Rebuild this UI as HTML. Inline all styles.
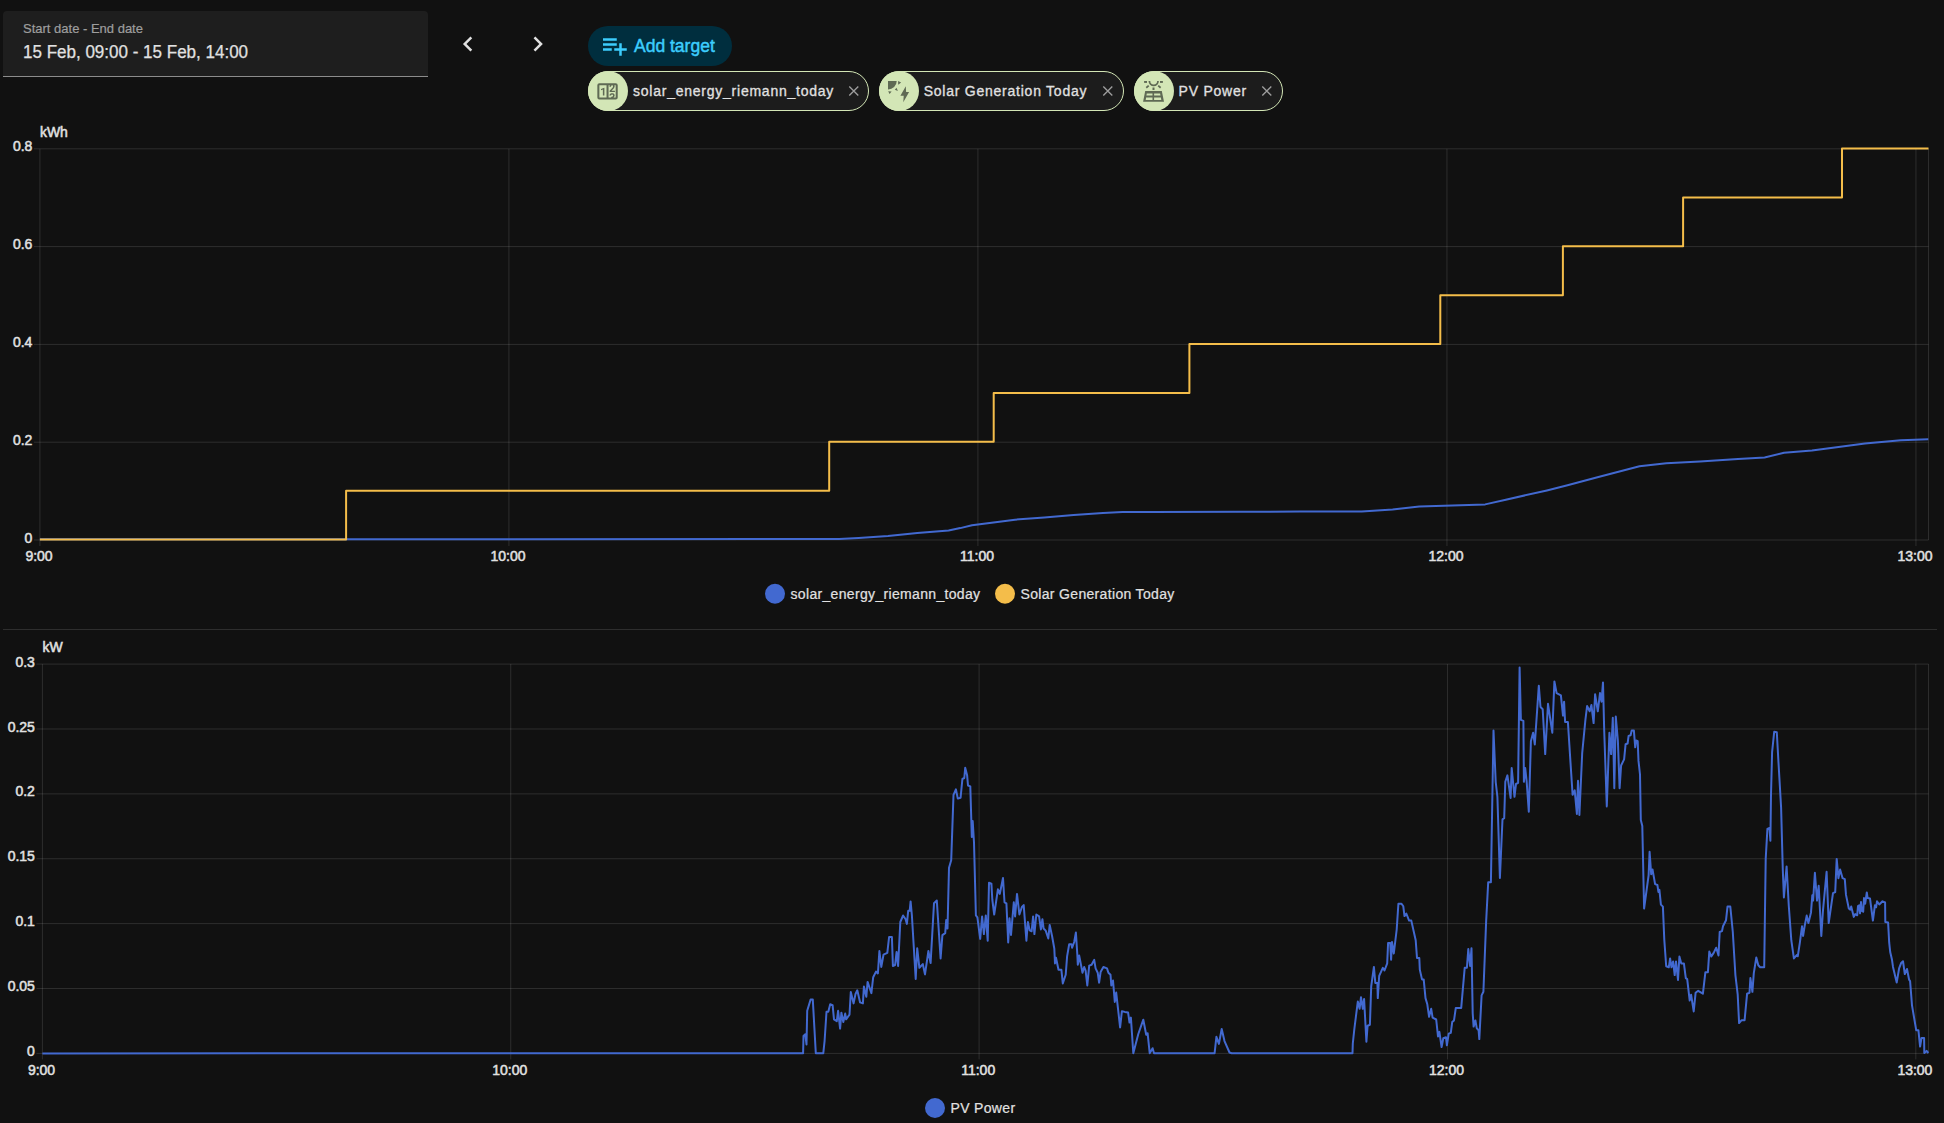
<!DOCTYPE html>
<html><head><meta charset="utf-8">
<style>
html,body{margin:0;padding:0;}
body{width:1944px;height:1123px;overflow:hidden;background:#111111;position:relative;font-family:"Liberation Sans",sans-serif;color:#e1e1e1;}
.abs{position:absolute;white-space:nowrap;}
#datefield{left:3px;top:11px;width:425px;height:65px;background:#1e1e1e;border-radius:4px 4px 0 0;border-bottom:1px solid #8c8c8c;}
#lbl{left:23px;top:22.2px;font-size:13px;line-height:13px;color:#9e9e9e;-webkit-text-stroke:0.2px #9e9e9e;}
#dval{left:23px;top:43.4px;font-size:18px;line-height:18px;color:#e1e1e1;-webkit-text-stroke:0.25px #e1e1e1;transform:scaleX(0.945);transform-origin:0 0;}
#addbtn{left:588px;top:26px;width:144px;height:40px;border-radius:20px;background:#002e3e;}
#addtxt{left:634px;top:37.6px;font-size:17.5px;line-height:17.5px;color:#3ccdfd;-webkit-text-stroke:0.45px #3ccdfd;}
.chip{position:absolute;top:71px;height:38px;border:1px solid #d3e6b6;border-radius:20px;background:#1c1c1c;}
.chipic{position:absolute;top:71px;width:40px;height:40px;border-radius:20px;background:#d3e6b6;}
.chiptxt{position:absolute;top:84px;font-size:14px;line-height:14px;color:#e1e1e1;letter-spacing:0.76px;-webkit-text-stroke:0.3px #e1e1e1;white-space:nowrap;}
svg{position:absolute;left:0;top:0;}
.ax{font-family:"Liberation Sans",sans-serif;font-size:14px;fill:#e1e1e1;stroke:#e1e1e1;stroke-width:0.5px;}
.lg{font-family:"Liberation Sans",sans-serif;font-size:14px;fill:#e1e1e1;letter-spacing:0.33px;stroke:#e1e1e1;stroke-width:0.2px;}
</style></head><body>
<div id="datefield" class="abs"></div>
<div id="lbl" class="abs">Start date - End date</div>
<div id="dval" class="abs">15 Feb, 09:00 - 15 Feb, 14:00</div>
<div id="addbtn" class="abs"></div>
<div id="addtxt" class="abs">Add target</div>

<div class="chip" style="left:588px;width:278.5px"></div>
<div class="chipic" style="left:588px"></div>
<div class="chiptxt" style="left:633px">solar_energy_riemann_today</div>

<div class="chip" style="left:879px;width:243px"></div>
<div class="chipic" style="left:879px"></div>
<div class="chiptxt" style="left:923.7px">Solar Generation Today</div>

<div class="chip" style="left:1134px;width:146.5px"></div>
<div class="chipic" style="left:1134px"></div>
<div class="chiptxt" style="left:1178.6px">PV Power</div>

<svg width="1944" height="120">
  <path d="M15.41,16.58L10.83,12L15.41,7.41L14,6L8,12L14,18L15.41,16.58Z" fill="#e1e1e1" transform="translate(452.97,29) scale(1.25)"/>
  <path d="M8.59,16.58L13.17,12L8.59,7.41L10,6L16,12L10,18L8.59,16.58Z" fill="#e1e1e1" transform="translate(522.83,29) scale(1.25)"/>
  <path d="M3 16H10V14H3M18 14V10H16V14H12V16H16V20H18V16H22V14M14 6H3V8H14M14 10H3V12H14V10Z" fill="#3ccdfd" transform="translate(599.25,30.8) scale(1.25)"/>
  <!-- chip icons -->
  <path fill="#5f6a54" transform="translate(595.3,79.2) scale(1.02)" d="M4,4H20A2,2 0 0,1 22,6V18A2,2 0 0,1 20,20H4A2,2 0 0,1 2,18V6A2,2 0 0,1 4,4M4,6V18H11V6H4M20,18V6H18.76C19,6.54 18.95,7.07 18.95,7.13C18.88,7.8 18.41,8.5 18.24,8.75L15.91,11.3L19.23,11.28L19.24,12.5L14.04,12.47L14,11.47C14,11.47 17.05,8.24 17.2,7.950C17.34,7.67 17.91,6 16.5,6C15.27,6.05 15.41,7.3 15.41,7.3L13.87,7.31C13.87,7.31 13.88,6.65 14.25,6H13V18H15.58L15.57,17.14L16.54,17.13C16.54,17.13 17.45,16.97 17.46,16.08C17.5,15.08 16.65,15.08 16.5,15.08C16.37,15.08 15.43,15.13 15.43,15.970H13.91C13.91,15.97 13.95,13.89 16.5,13.89C19.1,13.89 18.96,15.91 18.96,15.91C18.96,15.91 19,17.16 17.85,17.63L18.37,18H20M8.92,16H7.42V10.2L5.62,10.76V9.53L8.75,8.41H8.92V16Z"/>
  <g fill="#5f6a54">
    <path d="M888,81 H896.7 A8.6,8.4 0 0,1 888,89.4 Z"/>
    <path d="M898.1,81 L901.1,82.6 L898.2,84.8 Z"/>
    <path d="M896.5,87.7 L894.8,89.7 L897.9,91 Z"/>
    <path d="M888.2,91.2 L891.6,91.4 L889.6,94.1 Z"/>
    <path d="M905.8,86.3 L900.4,95.7 L903.7,95.7 L903.3,102.2 L909.1,92.05 L906.1,92.05 Z"/>
  </g>
  <g fill="#5f6a54">
    <rect x="1144.1" y="81" width="2.9" height="1.9"/>
    <rect x="1160" y="81" width="2.9" height="1.9"/>
    <rect x="1152.5" y="87.5" width="2" height="2.5"/>
    <rect x="-1.6" y="-0.9" width="3.2" height="1.8" transform="translate(1147.5,86.7) rotate(-40)"/>
    <rect x="-1.6" y="-0.9" width="3.2" height="1.8" transform="translate(1159.4,86.7) rotate(40)"/>
    <path fill-rule="evenodd" d="M1145.2,91.1 L1161.8,91.1 L1164,101.85 L1143.1,101.85 Z M1146.8,93.4 L1152.5,93.4 L1152.5,95.6 L1146.4,95.6 Z M1154.1,93.4 L1160.1,93.4 L1160.5,95.6 L1154.1,95.6 Z M1146.1,97.6 L1152.5,97.6 L1152.5,99.9 L1145.7,99.9 Z M1154.1,97.6 L1160.9,97.6 L1161.3,99.9 L1154.1,99.9 Z"/>
  </g>
  <path d="M1149.4,81 A4.3,4.3 0 0,0 1158,81" fill="none" stroke="#5f6a54" stroke-width="1.75"/>
  <g stroke="#9e9e9e" stroke-width="1.35" fill="none">
    <path d="M849.3,86.4 L858.3,95.4 M858.3,86.4 L849.3,95.4"/>
    <path d="M1103.3,86.4 L1112.3,95.4 M1112.3,86.4 L1103.3,95.4"/>
    <path d="M1262.3,86.4 L1271.3,95.4 M1271.3,86.4 L1262.3,95.4"/>
  </g>
</svg>
<svg width="1944" height="1123" style="left:0;top:0">
<line x1="3" y1="629.5" x2="1937" y2="629.5" stroke="#2e2e2e" stroke-width="1"/>
<line x1="33.9" y1="540.00" x2="1928.5" y2="540.00" stroke="rgba(255,255,255,0.12)" stroke-width="1"/><line x1="33.9" y1="442.20" x2="1928.5" y2="442.20" stroke="rgba(255,255,255,0.12)" stroke-width="1"/><line x1="33.9" y1="344.40" x2="1928.5" y2="344.40" stroke="rgba(255,255,255,0.12)" stroke-width="1"/><line x1="33.9" y1="246.60" x2="1928.5" y2="246.60" stroke="rgba(255,255,255,0.12)" stroke-width="1"/><line x1="33.9" y1="148.80" x2="1928.5" y2="148.80" stroke="rgba(255,255,255,0.12)" stroke-width="1"/><line x1="39.90" y1="148.80" x2="39.90" y2="546.00" stroke="rgba(255,255,255,0.12)" stroke-width="1"/><line x1="508.91" y1="148.80" x2="508.91" y2="546.00" stroke="rgba(255,255,255,0.12)" stroke-width="1"/><line x1="977.92" y1="148.80" x2="977.92" y2="546.00" stroke="rgba(255,255,255,0.12)" stroke-width="1"/><line x1="1446.94" y1="148.80" x2="1446.94" y2="546.00" stroke="rgba(255,255,255,0.12)" stroke-width="1"/><line x1="1915.95" y1="148.80" x2="1915.95" y2="546.00" stroke="rgba(255,255,255,0.12)" stroke-width="1"/><line x1="1928.5" y1="148.80" x2="1928.5" y2="540.00" stroke="rgba(255,255,255,0.12)" stroke-width="1"/><text x="32.4" y="542.5" text-anchor="end" class="ax">0</text><text x="32.4" y="444.7" text-anchor="end" class="ax">0.2</text><text x="32.4" y="346.9" text-anchor="end" class="ax">0.4</text><text x="32.4" y="249.1" text-anchor="end" class="ax">0.6</text><text x="32.4" y="151.3" text-anchor="end" class="ax">0.8</text><text x="39.0" y="560.8" text-anchor="middle" class="ax">9:00</text><text x="508.0" y="560.8" text-anchor="middle" class="ax">10:00</text><text x="977.0" y="560.8" text-anchor="middle" class="ax">11:00</text><text x="1446.0" y="560.8" text-anchor="middle" class="ax">12:00</text><text x="1915.0" y="560.8" text-anchor="middle" class="ax">13:00</text><text x="39.9" y="136.5" class="ax">kWh</text>
<path d="M39.9,539.3 L800.0,539.1 L839.1,538.9 L858.6,537.9 L888.0,535.9 L917.3,533.0 L948.6,530.5 L960.3,528.1 L972.0,525.2 L995.5,522.3 L1015.0,519.7 L1044.3,517.4 L1073.7,515.0 L1103.0,513.1 L1122.5,512.1 L1151.8,511.9 L1240.0,511.7 L1300.0,511.6 L1361.7,511.6 L1392.6,509.5 L1419.3,506.5 L1444.0,505.8 L1485.2,504.4 L1505.8,499.7 L1546.9,490.4 L1567.5,485.3 L1598.4,477.0 L1639.5,466.3 L1666.3,463.3 L1700.0,461.6 L1738.0,458.9 L1764.6,457.5 L1784.0,452.7 L1812.0,450.4 L1865.0,443.4 L1900.8,440.3 L1928.3,439.3" fill="none" stroke="#4269d0" stroke-width="2" stroke-linejoin="round"/>
<path d="M39.9,539.60 H346.1 V490.73 H829.2 V441.85 H993.7 V392.98 H1189.4 V344.10 H1440.3 V295.23 H1562.9 V246.35 H1683.1 V197.48 H1842 V148.60 H1928.5" fill="none" stroke="#f4bd4a" stroke-width="2" stroke-linejoin="round"/>
<circle cx="775" cy="593.7" r="10" fill="#4269d0"/>
<text x="790.5" y="598.8" class="lg">solar_energy_riemann_today</text>
<circle cx="1005" cy="593.7" r="10" fill="#f4bd4a"/>
<text x="1020.5" y="598.8" class="lg">Solar Generation Today</text>
<line x1="36.4" y1="1053.40" x2="1928.5" y2="1053.40" stroke="rgba(255,255,255,0.12)" stroke-width="1"/><line x1="36.4" y1="988.52" x2="1928.5" y2="988.52" stroke="rgba(255,255,255,0.12)" stroke-width="1"/><line x1="36.4" y1="923.63" x2="1928.5" y2="923.63" stroke="rgba(255,255,255,0.12)" stroke-width="1"/><line x1="36.4" y1="858.75" x2="1928.5" y2="858.75" stroke="rgba(255,255,255,0.12)" stroke-width="1"/><line x1="36.4" y1="793.87" x2="1928.5" y2="793.87" stroke="rgba(255,255,255,0.12)" stroke-width="1"/><line x1="36.4" y1="728.98" x2="1928.5" y2="728.98" stroke="rgba(255,255,255,0.12)" stroke-width="1"/><line x1="36.4" y1="664.10" x2="1928.5" y2="664.10" stroke="rgba(255,255,255,0.12)" stroke-width="1"/><line x1="42.40" y1="664.10" x2="42.40" y2="1059.40" stroke="rgba(255,255,255,0.12)" stroke-width="1"/><line x1="510.75" y1="664.10" x2="510.75" y2="1059.40" stroke="rgba(255,255,255,0.12)" stroke-width="1"/><line x1="979.10" y1="664.10" x2="979.10" y2="1059.40" stroke="rgba(255,255,255,0.12)" stroke-width="1"/><line x1="1447.45" y1="664.10" x2="1447.45" y2="1059.40" stroke="rgba(255,255,255,0.12)" stroke-width="1"/><line x1="1915.80" y1="664.10" x2="1915.80" y2="1059.40" stroke="rgba(255,255,255,0.12)" stroke-width="1"/><line x1="1928.5" y1="664.10" x2="1928.5" y2="1053.40" stroke="rgba(255,255,255,0.12)" stroke-width="1"/><text x="34.9" y="1055.9" text-anchor="end" class="ax">0</text><text x="34.9" y="991.0" text-anchor="end" class="ax">0.05</text><text x="34.9" y="926.1" text-anchor="end" class="ax">0.1</text><text x="34.9" y="861.2" text-anchor="end" class="ax">0.15</text><text x="34.9" y="796.4" text-anchor="end" class="ax">0.2</text><text x="34.9" y="731.5" text-anchor="end" class="ax">0.25</text><text x="34.9" y="666.6" text-anchor="end" class="ax">0.3</text><text x="41.5" y="1074.8" text-anchor="middle" class="ax">9:00</text><text x="509.8" y="1074.8" text-anchor="middle" class="ax">10:00</text><text x="978.2" y="1074.8" text-anchor="middle" class="ax">11:00</text><text x="1446.5" y="1074.8" text-anchor="middle" class="ax">12:00</text><text x="1914.9" y="1074.8" text-anchor="middle" class="ax">13:00</text><text x="42.4" y="651.5" class="ax">kW</text>
<path d="M42.4,1053.4 L803.1,1053.2 L803.5,1036.0 L805.3,1034.2 L806.5,1044.5 L807.2,1010.8 L810.6,999.6 L812.8,999.6 L815.8,1053.2 L823.3,1053.2 L824.6,1040.8 L826.5,1011.8 L828.3,1011.8 L830.2,1004.3 L832.6,1005.2 L834.0,1019.3 L836.8,1021.1 L838.1,1010.8 L840.1,1028.6 L841.4,1012.7 L843.3,1022.0 L845.2,1013.6 L846.1,1019.3 L849.5,1014.6 L850.8,992.1 L853.6,1003.4 L855.5,994.0 L857.3,990.3 L860.1,1002.4 L862.9,1003.4 L863.9,986.5 L866.3,996.8 L867.6,981.9 L869.5,987.5 L871.4,993.1 L873.2,977.2 L876.0,971.6 L877.9,973.4 L879.4,951.0 L881.3,966.9 L883.5,954.7 L887.3,952.9 L889.1,937.0 L891.9,937.0 L892.9,966.0 L895.1,965.0 L896.6,951.9 L898.1,966.0 L900.3,922.0 L903.1,915.5 L905.6,919.2 L906.9,923.9 L908.2,910.8 L909.7,910.8 L910.6,901.4 L911.9,915.5 L915.7,979.0 L917.2,948.2 L919.4,967.8 L922.8,964.1 L925.0,974.4 L928.4,951.0 L930.6,963.1 L934.0,903.3 L936.8,900.5 L940.6,958.5 L942.4,935.1 L945.2,933.2 L946.2,920.1 L947.5,928.5 L949.0,867.8 L951.2,860.3 L953.5,794.9 L955.9,789.3 L957.8,798.6 L960.6,797.7 L962.4,779.0 L964.3,778.0 L965.2,767.8 L967.1,775.2 L968.0,785.5 L970.3,786.4 L971.8,836.9 L972.7,821.0 L974.0,842.5 L975.9,915.4 L977.4,917.3 L980.2,938.8 L982.1,916.4 L983.9,934.1 L985.8,915.4 L987.7,940.7 L989.0,882.7 L991.4,883.6 L992.3,899.5 L994.2,914.5 L997.9,889.3 L999.8,893.9 L1003.0,878.0 L1004.5,902.3 L1006.4,903.3 L1008.2,942.5 L1009.5,918.2 L1011.0,935.0 L1013.8,902.3 L1015.1,916.4 L1017.0,893.9 L1019.4,914.5 L1021.9,907.0 L1023.7,905.1 L1026.4,940.7 L1027.9,922.0 L1029.7,930.4 L1031.6,931.3 L1033.1,916.4 L1034.4,934.1 L1036.3,914.5 L1039.1,916.4 L1040.9,929.4 L1042.4,919.2 L1043.6,928.5 L1045.7,930.6 L1048.3,938.5 L1049.7,924.9 L1052.1,936.3 L1054.3,948.5 L1055.0,963.4 L1056.0,957.7 L1058.5,969.8 L1061.4,969.8 L1062.8,983.4 L1065.7,974.8 L1067.1,956.3 L1069.2,944.2 L1071.4,944.2 L1072.1,947.7 L1074.2,942.0 L1075.9,932.5 L1077.3,954.2 L1077.8,964.8 L1079.2,955.6 L1082.5,972.7 L1084.2,967.0 L1085.6,970.5 L1087.3,985.5 L1089.2,965.6 L1091.6,964.8 L1094.2,959.9 L1095.6,968.4 L1097.7,972.7 L1099.1,982.7 L1100.6,972.0 L1103.4,967.0 L1107.0,968.4 L1108.4,972.7 L1110.5,974.8 L1111.3,985.5 L1113.0,980.5 L1114.8,1001.9 L1116.2,992.6 L1120.1,1027.5 L1121.9,1011.2 L1124.8,1011.9 L1128.1,1012.6 L1129.5,1022.6 L1130.9,1017.6 L1133.3,1053.2 L1138.3,1034.0 L1143.3,1019.7 L1146.2,1034.7 L1147.6,1033.2 L1149.7,1053.2 L1152.6,1048.2 L1154.0,1053.2 L1214.6,1053.2 L1216.4,1036.8 L1218.9,1043.9 L1221.7,1029.0 L1224.5,1041.1 L1229.5,1052.5 L1231.7,1053.2 L1352.5,1053.2 L1352.8,1043.5 L1354.3,1029.3 L1357.8,1001.6 L1359.6,1008.8 L1361.0,997.2 L1362.8,1008.8 L1364.1,999.0 L1366.4,1041.7 L1367.6,1025.7 L1369.9,1024.8 L1371.2,986.5 L1373.9,966.9 L1375.3,982.9 L1377.4,982.9 L1377.8,998.1 L1379.2,975.8 L1382.8,967.8 L1384.5,970.5 L1387.2,963.3 L1388.1,942.9 L1390.2,942.9 L1391.1,959.8 L1392.0,942.0 L1393.8,953.5 L1396.7,929.5 L1398.4,903.7 L1401.5,903.7 L1403.3,906.3 L1404.5,916.1 L1406.3,913.5 L1409.1,920.6 L1411.3,920.6 L1415.7,940.2 L1417.0,958.0 L1419.3,958.0 L1419.8,969.6 L1422.0,979.4 L1423.7,979.4 L1425.5,998.1 L1427.3,1004.3 L1429.1,1016.8 L1431.2,1008.8 L1432.6,1017.7 L1436.2,1019.5 L1438.0,1036.4 L1439.4,1031.9 L1441.6,1047.1 L1443.3,1038.2 L1446.0,1037.3 L1446.9,1045.3 L1448.7,1033.7 L1450.8,1032.8 L1452.2,1022.1 L1454.0,1020.4 L1455.8,1007.9 L1461.2,1007.9 L1464.7,967.8 L1466.9,967.8 L1468.3,949.1 L1470.1,966.0 L1471.5,948.2 L1472.7,1013.2 L1473.6,1026.6 L1475.4,1020.4 L1476.8,1028.4 L1478.6,1030.2 L1479.3,1039.1 L1481.6,995.4 L1483.4,991.8 L1486.1,922.4 L1488.2,882.3 L1490.9,882.3 L1493.5,730.5 L1495.7,781.8 L1497.4,796.8 L1499.9,878.0 L1502.5,819.3 L1504.2,818.2 L1505.3,781.8 L1507.4,775.4 L1510.6,797.9 L1511.7,768.0 L1514.5,796.8 L1516.0,784.0 L1518.1,782.9 L1519.6,667.5 L1520.9,719.9 L1523.4,720.9 L1523.9,781.8 L1525.2,768.0 L1526.6,780.8 L1528.8,811.8 L1530.9,741.2 L1533.1,732.7 L1534.8,744.4 L1538.8,685.7 L1540.5,707.0 L1542.7,709.2 L1545.2,754.1 L1548.0,703.8 L1552.3,732.7 L1554.4,681.4 L1556.6,693.1 L1560.9,695.3 L1563.0,715.6 L1564.1,701.7 L1565.1,722.0 L1567.9,722.0 L1570.5,762.6 L1572.6,794.7 L1574.7,790.4 L1576.9,813.9 L1578.0,780.8 L1579.4,815.0 L1582.2,753.0 L1585.4,719.9 L1587.1,706.0 L1589.7,711.3 L1591.4,704.9 L1593.6,723.1 L1595.1,694.2 L1597.8,711.3 L1600.0,693.1 L1601.5,701.7 L1603.0,682.4 L1604.2,730.5 L1606.8,806.4 L1609.4,732.7 L1611.1,754.1 L1612.8,717.7 L1614.3,788.3 L1615.8,716.6 L1617.9,741.2 L1619.6,788.3 L1621.1,765.5 L1624.1,759.4 L1625.6,744.2 L1627.6,743.5 L1628.6,735.9 L1630.6,735.2 L1631.7,730.6 L1633.9,730.6 L1635.2,747.3 L1636.2,740.5 L1637.7,741.2 L1638.5,760.9 L1640.0,774.5 L1640.8,820.0 L1642.3,826.1 L1644.1,908.5 L1648.6,875.3 L1649.6,851.8 L1651.2,874.3 L1652.5,869.4 L1655.1,884.1 L1657.4,885.0 L1658.4,891.9 L1659.4,889.9 L1660.9,904.6 L1662.9,906.6 L1664.3,939.9 L1666.2,966.3 L1668.8,967.3 L1670.1,958.5 L1671.5,967.3 L1673.1,961.4 L1674.7,975.1 L1676.0,961.4 L1678.0,980.0 L1679.4,956.5 L1681.3,963.4 L1683.9,963.4 L1685.8,978.1 L1687.2,979.1 L1689.7,1000.6 L1691.1,994.7 L1693.7,1011.4 L1695.6,992.8 L1698.2,990.8 L1702.9,993.7 L1705.4,972.2 L1707.9,972.2 L1709.3,951.6 L1711.3,956.5 L1713.8,952.6 L1716.2,947.7 L1718.5,955.5 L1719.7,932.0 L1722.0,931.1 L1723.0,926.2 L1726.0,920.3 L1727.5,906.6 L1730.3,906.6 L1732.8,932.0 L1735.4,975.1 L1737.7,994.7 L1739.1,1023.1 L1741.6,1020.2 L1744.6,1020.2 L1747.1,993.7 L1749.5,992.8 L1750.4,978.1 L1752.4,991.8 L1753.8,973.2 L1756.3,957.5 L1758.3,965.3 L1760.2,967.3 L1764.2,967.3 L1765.7,858.9 L1767.4,829.0 L1769.5,828.0 L1770.4,840.8 L1771.0,794.8 L1772.1,752.1 L1774.2,731.8 L1776.8,732.2 L1778.5,762.8 L1781.1,807.6 L1782.8,869.6 L1783.9,897.4 L1786.6,866.4 L1788.8,906.0 L1791.3,940.2 L1793.9,958.4 L1796.7,955.1 L1797.8,956.2 L1799.9,942.3 L1802.0,926.3 L1803.1,935.9 L1804.6,926.3 L1806.7,915.6 L1808.4,923.1 L1811.0,912.4 L1812.3,895.3 L1813.1,900.6 L1814.9,872.8 L1817.0,900.6 L1818.7,885.7 L1821.3,935.9 L1823.0,910.3 L1826.6,871.8 L1828.7,923.1 L1833.0,893.2 L1835.2,892.1 L1836.7,858.9 L1838.4,878.2 L1840.1,869.6 L1842.6,878.2 L1844.8,879.2 L1846.0,894.9 L1848.8,908.5 L1850.3,909.7 L1851.2,906.5 L1853.8,916.9 L1855.2,914.1 L1857.2,915.3 L1858.0,906.1 L1859.2,905.3 L1860.0,913.3 L1861.0,902.1 L1861.8,910.9 L1863.2,911.7 L1864.0,898.1 L1865.2,903.7 L1866.8,892.5 L1867.6,898.1 L1870.0,898.5 L1872.9,920.5 L1874.9,905.3 L1876.1,907.3 L1877.0,901.3 L1879.3,904.5 L1882.5,901.3 L1885.1,902.5 L1885.3,922.1 L1888.1,922.5 L1889.2,942.7 L1890.2,952.0 L1892.0,959.8 L1893.0,966.9 L1896.7,982.6 L1899.1,968.3 L1901.0,963.3 L1903.0,961.2 L1904.8,974.0 L1907.0,969.0 L1909.1,979.7 L1910.1,981.1 L1912.0,1005.3 L1916.2,1030.2 L1918.4,1030.2 L1920.1,1046.6 L1921.5,1038.1 L1924.1,1038.1 L1924.3,1053.0 L1926.6,1050.9 L1928.3,1053.0" fill="none" stroke="#4269d0" stroke-width="2" stroke-linejoin="round"/>
<circle cx="935" cy="1108" r="10" fill="#4269d0"/>
<text x="950.5" y="1113" class="lg">PV Power</text>
</svg>
</body></html>
